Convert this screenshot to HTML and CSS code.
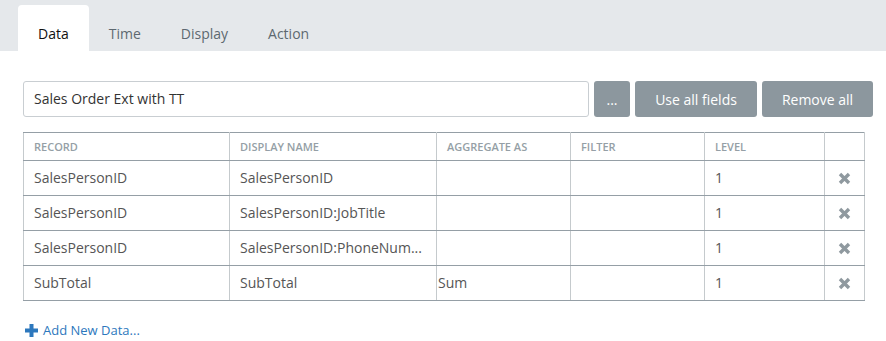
FILE: index.html
```html
<!DOCTYPE html>
<html>
<head>
<meta charset="utf-8">
<link rel="stylesheet" href="styles.css">
</head>
<body>
<div class="tabs">
  <div class="tab active">Data</div>
  <div class="tab">Time</div>
  <div class="tab">Display</div>
  <div class="tab">Action</div>
</div>
<div class="content">
  <div class="toolbar">
    <div class="input">Sales Order Ext with TT</div>
    <button class="btn btn-dots">...</button>
    <button class="btn btn-use">Use all fields</button>
    <button class="btn btn-remove">Remove all</button>
  </div>
  <table class="grid">
    <colgroup>
      <col class="c1"><col class="c2"><col class="c3"><col class="c4"><col class="c5"><col class="c6">
    </colgroup>
    <thead>
      <tr><th>Record</th><th>Display Name</th><th>Aggregate As</th><th>Filter</th><th>Level</th><th></th></tr>
    </thead>
    <tbody>
      <tr><td>SalesPersonID</td><td>SalesPersonID</td><td class="agg"></td><td></td><td>1</td><td class="del"><svg width="13" height="13" viewBox="0 0 13 13"><path d="M2 2 L11 11 M11 2 L2 11" stroke="#8f999f" stroke-width="3.4" stroke-linecap="butt"/></svg></td></tr>
      <tr><td>SalesPersonID</td><td>SalesPersonID:JobTitle</td><td class="agg"></td><td></td><td>1</td><td class="del"><svg width="13" height="13" viewBox="0 0 13 13"><path d="M2 2 L11 11 M11 2 L2 11" stroke="#8f999f" stroke-width="3.4" stroke-linecap="butt"/></svg></td></tr>
      <tr><td>SalesPersonID</td><td>SalesPersonID:PhoneNum...</td><td class="agg"></td><td></td><td>1</td><td class="del"><svg width="13" height="13" viewBox="0 0 13 13"><path d="M2 2 L11 11 M11 2 L2 11" stroke="#8f999f" stroke-width="3.4" stroke-linecap="butt"/></svg></td></tr>
      <tr><td>SubTotal</td><td>SubTotal</td><td class="agg">Sum</td><td></td><td>1</td><td class="del"><svg width="13" height="13" viewBox="0 0 13 13"><path d="M2 2 L11 11 M11 2 L2 11" stroke="#8f999f" stroke-width="3.4" stroke-linecap="butt"/></svg></td></tr>
    </tbody>
  </table>
  <a class="add" href="#"><svg width="13" height="13" viewBox="0 0 13 13"><path d="M6.5 0 V13 M0 6.5 H13" stroke="#2d78bd" stroke-width="4"/></svg><span>Add New Data...</span></a>
</div>
</body>
</html>
```

FILE: styles.css
```css
html, body {
  margin: 0;
  padding: 0;
  background: #fff;
  font-family: "Open Sans", "Liberation Sans", sans-serif;
  font-size: 14px;
  color: #555;
}
.tabs {
  display: flex;
  height: 51px;
  box-sizing: border-box;
  padding: 5px 0 0 18px;
  background: #e5e8eb;
}
.tab {
  padding: 19px 20px 0;
  line-height: 20px;
  color: #5d6870;
  border-radius: 4px 4px 0 0;
}
.tab.active {
  background: #fff;
  color: #111;
}
.content {
  padding: 30px 13px 0 23px;
}
.toolbar {
  display: flex;
  gap: 5px;
  height: 36px;
}
.input {
  flex: 1;
  box-sizing: border-box;
  border: 1px solid #c9ced2;
  border-radius: 3px;
  padding: 0 10px;
  line-height: 34px;
  color: #333;
}
.btn {
  border: none;
  border-radius: 3px;
  background: #8c979e;
  color: #fff;
  font-family: inherit;
  font-size: 14px;
  padding: 0;
  height: 36px;
}
.btn-dots { width: 36px; }
.btn-use { width: 122px; }
.btn-remove { width: 111px; }
.grid {
  margin-top: 15px;
  border-collapse: collapse;
  width: 841px;
  table-layout: fixed;
}
.c1 { width: 206px; }
.c2 { width: 207px; }
.c3 { width: 134px; }
.c4 { width: 134px; }
.c5 { width: 120px; }
.c6 { width: 40px; }
.grid th, .grid td {
  border-left: 1px solid #c5cacd;
  border-right: 1px solid #c5cacd;
  border-top: 1px solid #959fa6;
  border-bottom: 1px solid #959fa6;
  padding: 0 10px;
  text-align: left;
  white-space: nowrap;
  overflow: hidden;
}
.grid th {
  height: 27px;
  font-size: 11px;
  font-weight: 600;
  text-transform: uppercase;
  color: #959fa6;
}
.grid td {
  height: 34px;
  line-height: 20px;
  color: #555;
}
.grid td.agg { padding-left: 1px; }
.grid td.del { padding: 0; text-align: center; }
.grid td.del svg { display: block; margin: 0 auto; }
.add {
  display: inline-flex;
  align-items: center;
  gap: 5px;
  margin: 20px 0 0 2px;
  color: #2d78bd;
  text-decoration: none;
  font-size: 13px;
  line-height: 18px;
}
```
